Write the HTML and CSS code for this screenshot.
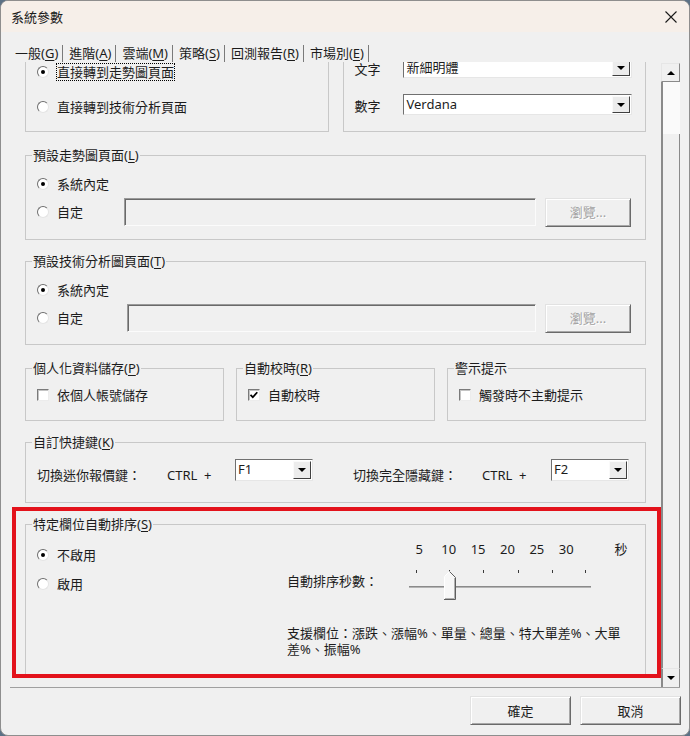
FILE: index.html
```html
<!DOCTYPE html>
<html lang="zh-Hant">
<head>
<meta charset="utf-8">
<title>系統參數</title>
<link rel="stylesheet" href="styles.css">
</head>
<body>
<div class="win">
  <header class="titlebar">
    <span class="title">系統參數</span>
    <svg class="close" width="12" height="12" viewBox="0 0 12 12"><path d="M0.5 0.5L11.5 11.5M11.5 0.5L0.5 11.5" stroke="#1a1a1a" stroke-width="1.1" fill="none"/></svg>
  </header>
  <nav class="tabs">
    <span class="tab">一般(<u>G</u>)</span>
    <span class="tab">進階(<u>A</u>)</span>
    <span class="tab">雲端(<u>M</u>)</span>
    <span class="tab">策略(<u>S</u>)</span>
    <span class="tab">回測報告(<u>R</u>)</span>
    <span class="tab">市場別(<u>E</u>)</span>
  </nav>
  <div class="main">
    <div class="viewport">
      <div class="content">
        <div class="row two">
          <fieldset class="grp">
            <div class="body b-first">
              <div class="opt"><span class="radio on"></span><span class="txt focus">直接轉到走勢圖頁面</span></div>
              <div class="opt"><span class="radio"></span><span class="txt">直接轉到技術分析頁面</span></div>
            </div>
          </fieldset>
          <fieldset class="grp">
            <div class="body b-font">
              <div class="field"><span class="flabel">文字</span><div class="combo"><span class="cval">新細明體</span><span class="drop"></span></div></div>
              <div class="field"><span class="flabel">數字</span><div class="combo"><span class="cval">Verdana</span><span class="drop"></span></div></div>
            </div>
          </fieldset>
        </div>

        <fieldset class="grp sp2">
          <legend>預設走勢圖頁面(<u>L</u>)</legend>
          <div class="body b-page">
            <div class="opt"><span class="radio on"></span><span class="txt">系統內定</span></div>
            <div class="opt path"><span class="plabel"><span class="radio"></span><span class="txt">自定</span></span><span class="input"></span><span class="btn browse">瀏覽...</span></div>
          </div>
        </fieldset>

        <fieldset class="grp">
          <legend>預設技術分析圖頁面(<u>T</u>)</legend>
          <div class="body b-page b-tech">
            <div class="opt"><span class="radio on"></span><span class="txt">系統內定</span></div>
            <div class="opt path"><span class="plabel wide"><span class="radio"></span><span class="txt">自定</span></span><span class="input"></span><span class="btn browse">瀏覽...</span></div>
          </div>
        </fieldset>

        <div class="row three sp2">
          <fieldset class="grp">
            <legend>個人化資料儲存(<u>P</u>)</legend>
            <div class="body b-chk"><div class="opt"><span class="chk"></span><span class="txt">依個人帳號儲存</span></div></div>
          </fieldset>
          <fieldset class="grp">
            <legend>自動校時(<u>R</u>)</legend>
            <div class="body b-chk"><div class="opt"><span class="chk"><svg width="10" height="10" viewBox="0 0 10 10"><path d="M1.5 4.8L3.8 7.2L8.3 2.2" stroke="#000" stroke-width="1.7" fill="none"/></svg></span><span class="txt">自動校時</span></div></div>
          </fieldset>
          <fieldset class="grp">
            <legend>警示提示</legend>
            <div class="body b-chk"><div class="opt"><span class="chk"></span><span class="txt">觸發時不主動提示</span></div></div>
          </fieldset>
        </div>

        <fieldset class="grp sp2">
          <legend>自訂快捷鍵(<u>K</u>)</legend>
          <div class="body b-keys">
            <span class="klabel">切換迷你報價鍵：</span>
            <span class="ctrl">CTRL&nbsp;&nbsp;+</span>
            <div class="combo key"><span class="cval">F1</span><span class="drop"></span></div>
            <span class="klabel second">切換完全隱藏鍵：</span>
            <span class="ctrl c2">CTRL&nbsp;&nbsp;+</span>
            <div class="combo key"><span class="cval">F2</span><span class="drop"></span></div>
          </div>
        </fieldset>

        <fieldset class="grp">
          <legend>特定欄位自動排序(<u>S</u>)</legend>
          <div class="body b-sort">
            <div class="sort-opts">
              <div class="opt"><span class="radio on"></span><span class="txt">不啟用</span></div>
              <div class="opt"><span class="radio"></span><span class="txt">啟用</span></div>
            </div>
            <div class="sort-set">
              <div class="scale"><span>5</span><span>10</span><span>15</span><span>20</span><span>25</span><span>30</span><span class="sec">秒</span></div>
              <div class="slider-row">
                <span class="slabel">自動排序秒數：</span>
                <svg class="slider" width="190" height="34" viewBox="0 0 190 34">
                  <rect x="4" y="19" width="182" height="1" fill="#8a8a8a"/>
                  <rect x="4" y="20" width="182" height="1" fill="#b4b4b4"/>
                  <g fill="#3a3a3a">
                    <rect x="11" y="3" width="1" height="3"/>
                    <rect x="44" y="3" width="1" height="3"/>
                    <rect x="78" y="3" width="1" height="3"/>
                    <rect x="113" y="3" width="1" height="3"/>
                    <rect x="147" y="3" width="1" height="3"/>
                    <rect x="180" y="3" width="1" height="3"/>
                  </g>
                  <path d="M39.5 31.5V9.5L44.5 4.5L50.5 10.5V31.5Z" fill="#f7f7f7"/>
                  <path d="M44.5 4.5L50.5 10.5V32.5H39" stroke="#5e5e5e" fill="none"/>
                  <path d="M49.5 11V31.5H40" stroke="#b0b0b0" fill="none"/>
                  <path d="M39.5 32V9.5L44.5 4.5" stroke="#ffffff" fill="none"/>
                </svg>
              </div>
              <p class="support">支援欄位：漲跌、漲幅%、單量、總量、特大單差%、大單<br>差%、振幅%</p>
            </div>
          </div>
        </fieldset>
        <div class="more"></div>
      </div>
      <div class="mark"></div>
    </div>
    <div class="sbar">
      <span class="sbtn up"></span>
      <span class="thumb"></span>
      <span class="track"></span>
      <span class="sbtn down"></span>
    </div>
  </div>
  <footer class="footer">
    <span class="btn big">確定</span>
    <span class="btn big">取消</span>
  </footer>
</div>
</body>
</html>
```

FILE: styles.css
```css
* { box-sizing: border-box; }
html, body { margin: 0; padding: 0; }
body {
  width: 690px;
  height: 736px;
  overflow: hidden;
  background: #5b7186;
  font-family: "Noto Sans", "Noto Sans CJK TC", sans-serif;
  font-size: 13px;
  color: #1c1c1c;
}
u { text-decoration: underline; text-underline-offset: 2px; text-decoration-thickness: 1px; }

.win {
  width: 690px;
  height: 736px;
  background: #f0f0f0;
  border: 1px solid #8e8e8e;
  border-radius: 8px;
  overflow: hidden;
  display: flex;
  flex-direction: column;
}

.titlebar {
  height: 31px;
  flex: none;
  background: #f6efe9;
  display: flex;
  align-items: center;
  justify-content: space-between;
  padding: 0 12px 0 10px;
}
.title { line-height: 16px; }

.tabs {
  height: 30px;
  flex: none;
  display: flex;
  align-items: flex-start;
  padding: 13px 0 0 8px;
}
.tab {
  line-height: 17px;
  height: 17px;
  padding: 0 4px 0 6px;
  border-right: 1px solid #7a7a7a;
  white-space: nowrap;
}

.main {
  height: 626px;
  flex: none;
  margin: 0 9px;
  display: flex;
  border-bottom: 1px solid #a0a0a0;
}
.viewport {
  flex: 1;
  overflow: hidden;
  position: relative;
}
.content {
  margin-top: -32px;
  padding: 0 15px;
  display: flex;
  flex-direction: column;
  gap: 13px;
}
.sp2 { margin-top: 2px; }

.row { display: grid; }
.row.two { grid-template-columns: 1fr 1fr; column-gap: 14px; margin-bottom: 2px; }
.row.three { grid-template-columns: 1fr 1fr 1fr; column-gap: 12px; }

.grp {
  margin: 0;
  padding: 0;
  min-width: 0;
  border: 1px solid #c8c8c8;
}
.grp legend {
  margin-left: 6px;
  padding: 0 1px;
  line-height: 16px;
  height: 16px;
  white-space: nowrap;
}

.opt { display: flex; align-items: center; height: 20px; }
.txt { margin-left: 8px; line-height: 16px; white-space: nowrap; }
.focus { border: 1px dotted #000; margin-left: 7px; line-height: 16px; }

.radio {
  width: 12px;
  height: 12px;
  flex: none;
  border-radius: 50%;
  background: #fff;
  border: 1px solid;
  border-color: #6e6e6e #e4e4e4 #e4e4e4 #6e6e6e;
  display: flex;
  align-items: center;
  justify-content: center;
}
.radio.on::after {
  content: "";
  width: 4px;
  height: 4px;
  border-radius: 50%;
  background: #000;
}

.chk {
  width: 12px;
  height: 12px;
  flex: none;
  background: #fff;
  border: 1px solid;
  border-color: #7a7a7a #ececec #ececec #7a7a7a;
  box-shadow: inset 1px 1px 0 #c4c4c4;
  display: flex;
  align-items: center;
  justify-content: center;
}

/* first row (scrolled partly out of view) */
.b-first { padding: 31px 11px 14px; display: flex; flex-direction: column; gap: 15px; }
.b-font { padding: 26px 13px 0 11px; display: flex; flex-direction: column; gap: 16px; }
.field { display: flex; align-items: center; }
.flabel { width: 48px; line-height: 16px; padding-top: 3px; flex: none; }

.combo {
  flex: 1;
  height: 21px;
  display: flex;
  background: #fff;
  border: 1px solid;
  border-color: #707070 #e6e6e6 #e6e6e6 #707070;
  padding: 1px;
}
.cval { flex: 1; line-height: 17px; padding-left: 2px; white-space: nowrap; }
.drop {
  width: 18px;
  flex: none;
  background: #ececec;
  border: 1px solid;
  border-color: #fafafa #404040 #404040 #fafafa;
  display: flex;
  align-items: center;
  justify-content: center;
}
.drop::after {
  content: "";
  border-left: 4px solid transparent;
  border-right: 4px solid transparent;
  border-top: 4px solid #000;
}

/* page groups */
.b-page { padding: 11px 14px 12px 11px; display: flex; flex-direction: column; gap: 3px; }
.b-tech { padding-bottom: 11px; }
.opt.path { height: 30px; }
.plabel { display: flex; align-items: center; width: 87px; flex: none; }
.plabel.wide { width: 90px; }
.input {
  flex: 1;
  height: 28px;
  background: #f0f0f0;
  border: 1px solid;
  border-color: #9a9a9a #fbfbfb #fbfbfb #9a9a9a;
  box-shadow: inset 1px 1px 0 #6a6a6a;
}

.btn {
  display: flex;
  align-items: center;
  justify-content: center;
  background: #f0f0f0;
  border: 1px solid;
  border-color: #e2e2e2 #6a6a6a #6a6a6a #e2e2e2;
  box-shadow: inset 1px 1px 0 #ffffff, inset -1px -1px 0 #a8a8a8;
  line-height: 16px;
}
.btn.browse {
  width: 86px;
  height: 29px;
  margin-left: 9px;
  flex: none;
  color: #a2a2a2;
  text-shadow: 1px 1px 0 #ffffff;
}

/* checkbox groups */
.b-chk { padding: 9px 11px 15px; }

/* hotkeys */
.b-keys { display: flex; align-items: flex-start; padding: 9px 11px 19px; }
.klabel { width: 130px; flex: none; line-height: 16px; margin-top: 8px; white-space: nowrap; }
.klabel.second { width: 129px; margin-left: 40px; }
.ctrl { width: 68px; flex: none; line-height: 16px; margin-top: 8px; white-space: nowrap; }
.ctrl.c2 { width: 69px; }
.combo.key { flex: none; width: 78px; height: 22px; }
.combo.key .cval { padding-left: 1px; line-height: 16px; }

/* sort group */
.b-sort { display: flex; padding: 9px 11px 20px; }
.sort-opts { width: 250px; flex: none; padding-top: 4px; display: flex; flex-direction: column; gap: 9px; }
.sort-set { flex: 1; }
.scale { display: flex; padding-left: 117.6px; line-height: 16px; }
.scale span { width: 29.4px; text-align: center; flex: none; }
.scale .sec { width: 13px; margin-left: 33.5px; }
.slider-row { display: flex; margin-top: 10px; height: 34px; }
.slabel { width: 118px; flex: none; line-height: 16px; margin-top: 6px; white-space: nowrap; }
.slider { display: block; flex: none; }
.support { margin: 24px 0 0; line-height: 16px; white-space: nowrap; }
.more { height: 40px; flex: none; }

.mark {
  position: absolute;
  left: 2px;
  top: 445px;
  width: 649px;
  height: 171px;
  border: 4px solid #e3121b;
}

/* scrollbar */
.sbar { width: 19px; flex: none; display: flex; flex-direction: column; padding-top: 1px; }
.sbtn {
  height: 19px;
  flex: none;
  display: flex;
  align-items: center;
  justify-content: center;
  border: 1px solid;
  border-color: #e6e6e6 #8a8a8a #8a8a8a #e6e6e6;
}
.sbtn.down { border-bottom: none; border-left: 2px solid #8a8a8a; }
.up::after {
  content: "";
  border-left: 4px solid transparent;
  border-right: 4px solid transparent;
  border-bottom: 4px solid #000;
}
.down::after {
  content: "";
  border-left: 4px solid transparent;
  border-right: 4px solid transparent;
  border-top: 4px solid #000;
}
.thumb { height: 52px; flex: none; background: #fafafa; border-left: 2px solid #8a8a8a; }
.track { flex: 1; border-left: 2px solid #8a8a8a; border-right: 1px solid #8a8a8a; }

.footer {
  flex: 1;
  display: flex;
  justify-content: flex-end;
  align-items: flex-start;
  gap: 9px;
  padding: 8px 8px 0 0;
}
.btn.big { width: 101px; height: 29px; }
```
